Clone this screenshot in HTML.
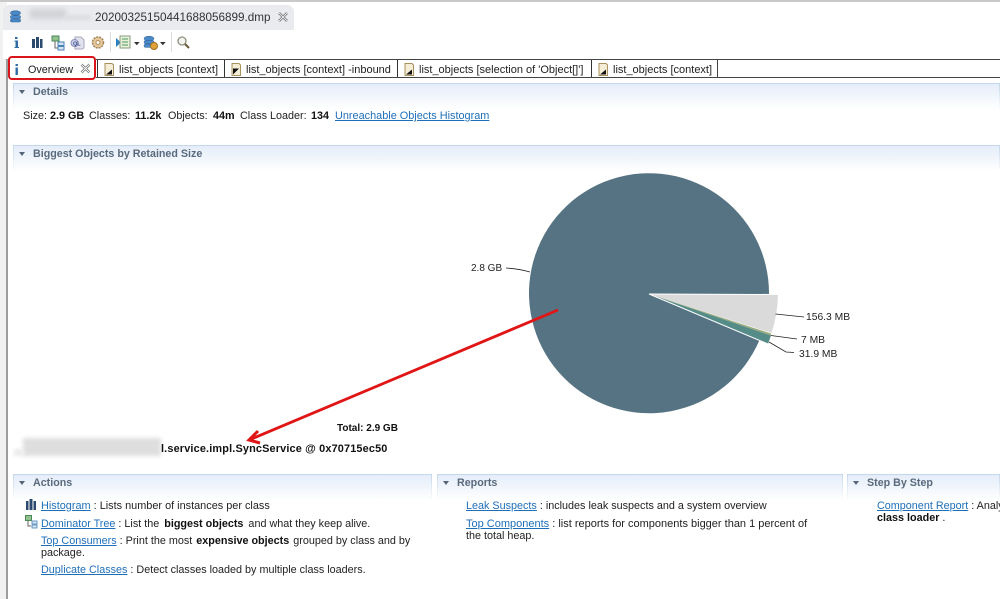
<!DOCTYPE html>
<html><head><meta charset="utf-8"><style>
html,body{margin:0;padding:0;background:#fff}
#p{position:relative;width:1000px;height:599px;overflow:hidden;background:#fff;font:10.8px/12px "Liberation Sans",sans-serif;color:#222;filter:blur(.25px)}
.t{position:absolute;white-space:nowrap}
a{color:#1f6fb8;text-decoration:underline}
b{color:#111}
.sec{position:absolute;height:26px;border-top:1px solid #c5d8ea;background:linear-gradient(#e4edf9,#fff);box-sizing:border-box}
.sec:before,.sec:after{content:"";position:absolute;top:0;width:1px;height:26px;background:linear-gradient(#c5d8ea,#fff)}
.sec:before{left:0}.sec:after{right:0}
.sec span{position:absolute;left:20px;top:2px;font-weight:bold;color:#5a6a7d;font-size:10.7px}
.sec i{position:absolute;left:6px;top:6px;width:0;height:0;border:3.5px solid transparent;border-top:4px solid #56657a}
.tab{position:absolute;top:60px;height:17px;border-left:1px solid #333;box-sizing:border-box}
</style></head><body><div id="p">
<div style="position:absolute;left:0;top:0;width:1000px;height:2px;background:#c9c9c9"></div>
<div style="position:absolute;left:0;top:2px;width:7px;height:597px;background:#f1f1f1"></div>
<div style="position:absolute;left:6px;top:30px;width:2px;height:569px;background:#9c9c9c"></div>
<div style="position:absolute;left:3px;top:5px;width:291px;height:25px;background:#e9ebef;border-radius:7px 7px 0 0"></div>
<div style="position:absolute;left:3px;top:30px;width:997px;height:29px;background:#fff"></div>

<svg style="position:absolute;left:0;top:0" width="1000" height="599">
<g fill="#4b8ac9" stroke="#2a5f96" stroke-width=".6"><ellipse cx="15.500" cy="13" rx="5" ry="2.200"/><rect x="10.500" y="15.500" width="10" height="3" rx="1.500"/><rect x="10.500" y="19" width="10" height="3" rx="1.500"/></g>
<path d="M279 13l8 8M287 13l-8 8" stroke="#666" stroke-width="2.400"/><path d="M279 13l8 8M287 13l-8 8" stroke="#f2f2f4" stroke-width="1"/>
<!-- toolbar -->
<path d="M15 37h2.500v2H15zM15 40.500h3V47h1v1h-4.500v-1h1v-5.500H14z" fill="#2e6ca6"/>
<path d="M32 39h3v9h-3zM36 37h3v11h-3zM40 39h2.500v9H40z" fill="#2c4a6e"/>
<rect x="52" y="36" width="7" height="5" fill="#8fc28f" stroke="#4d8a57"/><path d="M55 41v7h3" fill="none" stroke="#666"/><rect x="58" y="42" width="6" height="3.500" fill="#d5e6f5" stroke="#4a82b5"/><rect x="58" y="46.500" width="6" height="3.500" fill="#d5e6f5" stroke="#4a82b5"/>
<path d="M75 37h6l3 3v7a2 2 0 0 1-2 2h-7z" fill="#e2e2ee" stroke="#a7a7bb"/><ellipse cx="74.500" cy="43" rx="3.500" ry="3.500" fill="#cfd3e7" stroke="#8a90b8"/><text x="73" y="45.500" font-size="5.500" font-weight="bold" fill="#3a4d8f" font-family="Liberation Sans">QL</text>
<circle cx="98" cy="42.500" r="5.500" fill="#e5c99c" stroke="#a08259" stroke-width="1.500" stroke-dasharray="2 1"/><circle cx="98" cy="42.500" r="2" fill="#fff" stroke="#b08c5c"/>
<rect x="110" y="32" width="1" height="20" fill="#dcdcdc"/>
<path d="M116 38l5 4.500-5 4.500z" fill="#2a7fc0"/><rect x="120" y="36" width="10" height="12" fill="#e6f0dc" stroke="#8a9c7d"/><path d="M122 39h6M122 42h6M122 45h6" stroke="#4e9a59"/>
<path d="M134 42l5.600 0-2.800 3.200z" fill="#333"/>
<g fill="#4b8ac9" stroke="#2a5f96" stroke-width=".5"><ellipse cx="149" cy="38.500" rx="5" ry="2.300"/><rect x="144" y="40.500" width="10" height="3.200" rx="1.500"/><rect x="144" y="44.200" width="10" height="3.200" rx="1.500"/></g><circle cx="154" cy="46" r="3.500" fill="#e0a33c" stroke="#a0701f"/>
<path d="M160 42l5.600 0-2.800 3.200z" fill="#333"/>
<rect x="171" y="32" width="1" height="20" fill="#dcdcdc"/>
<circle cx="182" cy="41" r="4" fill="#f4f4f0" stroke="#8f8f80" stroke-width="1.300"/><path d="M185 44l4 4" stroke="#6b5a3b" stroke-width="2"/>
</svg>

<div class="t" style="left:30px;top:9px;width:36px;height:10px;background:#d2d3d7;filter:blur(2.500px)"></div>
<div class="t" style="left:66px;top:15px;width:24px;height:5px;background:#dcdde1;filter:blur(1.500px)"></div>
<div class="t" style="left:95px;top:12px;font-size:11.700px;color:#333">20200325150441688056899.dmp</div>

<!-- tab bar -->
<div style="position:absolute;left:96px;top:59px;width:904px;height:1px;background:#444"></div>
<div style="position:absolute;left:96px;top:77px;width:904px;height:1px;background:#444"></div>
<div style="position:absolute;left:717px;top:60px;width:1px;height:17px;background:#444"></div>
<div style="position:absolute;left:8px;top:56px;width:88px;height:24px;border:2.500px solid #d9141a;border-radius:4px;box-sizing:border-box;background:#fff"></div>
<div class="t" style="left:28px;top:64px;font-size:10.800px">Overview</div>
<svg style="position:absolute;left:0;top:55px" width="720" height="26">
<path d="M15.500 9h2.400v2h-2.400zM15.500 12.500h2.400V20h-2.400z" fill="#2e6ca6"/>
<path d="M81.500 9.500l8 8M89.500 9.500l-8 8" stroke="#666" stroke-width="2.400"/><path d="M81.500 9.500l8 8M89.500 9.500l-8 8" stroke="#fff" stroke-width="1"/>
<g><path d="M105 8.500h7l1.500 1.500V20.500H105z" fill="#f6edd6" stroke="#a8905f"/><path d="M106 19.500l6-5v5z" fill="#111"/></g>
<g><path d="M232 8.500h7l1.500 1.500V20.500H232z" fill="#f6edd6" stroke="#a8905f"/><path d="M233 19.500v-6h6z" fill="#111"/></g>
<g><path d="M405 8.500h7l1.500 1.500V20.500H405z" fill="#f6edd6" stroke="#a8905f"/><path d="M406 19.500l6-5v5z" fill="#111"/></g>
<g><path d="M599 8.500h7l1.500 1.500V20.500H599z" fill="#f6edd6" stroke="#a8905f"/><path d="M600 19.500l6-5v5z" fill="#111"/></g>
</svg>
<div class="tab" style="left:97px;width:127px"></div><div class="tab" style="left:224px;width:173px"></div><div class="tab" style="left:397px;width:194px"></div><div class="tab" style="left:591px;width:126px"></div>
<div class="t" style="left:119px;top:64px;font-size:11px">list_objects [context]</div>
<div class="t" style="left:246px;top:64px;font-size:11px">list_objects [context] -inbound</div>
<div class="t" style="left:419px;top:64px;font-size:11px">list_objects [selection of 'Object[]']</div>
<div class="t" style="left:613px;top:64px;font-size:11px">list_objects [context]</div>

<div class="sec" style="left:13px;top:83px;width:987px"><i></i><span>Details</span></div>
<div class="t" style="left:23px;top:110px">Size:</div><div class="t" style="left:50px;top:110px"><b>2.9 GB</b></div>
<div class="t" style="left:89px;top:110px">Classes:</div><div class="t" style="left:135px;top:110px"><b>11.2k</b></div>
<div class="t" style="left:168px;top:110px">Objects:</div><div class="t" style="left:213px;top:110px"><b>44m</b></div>
<div class="t" style="left:240px;top:110px">Class Loader:</div><div class="t" style="left:311px;top:110px"><b>134</b></div>
<div class="t" style="left:335px;top:110px;font-size:10.900px"><a>Unreachable Objects Histogram</a></div>
<div class="sec" style="left:13px;top:145px;width:987px"><i></i><span>Biggest Objects by Retained Size</span></div>

<svg style="position:absolute;left:0;top:0" width="1000" height="599">
<path d="M649 294L765 343A126 126 0 0 1 759.500 340A120 120 0 1 1 769 294Z" fill="#567383"/>
<path d="M649 294L778 294.500A129 129 0 0 1 771.500 333Z" fill="#dadada"/>
<path d="M649 294L771 333.500L771 335.500Z" fill="#9cac7c"/>
<path d="M649 294L771 335.500L768 344Z" fill="#568c88"/>
<path d="M649 294L768 344" stroke="#fff" stroke-width="1"/>
<path d="M649 294L778 294.500" stroke="#fff" stroke-width="1"/>
<path d="M506 268Q520 269 530 272M775.500 314L804 317M771 335.500L797 339M769 342L786 352L794 352.500" fill="none" stroke="#222" stroke-width=".8"/>
<path d="M558 310L249 440" stroke="#e01515" stroke-width="2.800"/>
<path d="M258 431L249 440L260 443" fill="none" stroke="#e01515" stroke-width="3"/>
</svg>
<div class="t" style="left:471px;top:263px;font-size:10px">2.8 GB</div>
<div class="t" style="left:806px;top:312px;font-size:10.300px">156.3 MB</div>
<div class="t" style="left:801px;top:335px;font-size:10.300px">7 MB</div>
<div class="t" style="left:799px;top:349px;font-size:10.300px">31.9 MB</div>
<div class="t" style="left:337px;top:423px;font-size:10px"><b>Total: 2.9 GB</b></div>
<div style="position:absolute;left:23px;top:438px;width:138px;height:18px;background:#dedede;filter:blur(2px)"></div>
<div style="position:absolute;left:14px;top:449px;width:10px;height:7px;background:#ececec;filter:blur(1.500px)"></div>
<div class="t" style="left:161px;top:443px;font-size:10.900px;font-weight:bold;color:#111;letter-spacing:.16px">l.service.impl.SyncService @ 0x70715ec50</div>

<div class="sec" style="left:13px;top:474px;width:419px"><i></i><span>Actions</span></div>
<div class="sec" style="left:437px;top:474px;width:406px"><i></i><span>Reports</span></div>
<div class="sec" style="left:847px;top:474px;width:153px"><i></i><span>Step By Step</span></div>

<svg style="position:absolute;left:0;top:0" width="60" height="599">
<path d="M26 501h2.500v9H26zM29.500 499h3v11h-3zM33.500 501h2.500v9h-2.500z" fill="#2c4a6e"/>
<rect x="25.500" y="515.500" width="6" height="5" fill="#8fc28f" stroke="#4d8a57"/><path d="M28 521v5h3" fill="none" stroke="#666"/><rect x="32" y="521" width="5" height="3" fill="#d5e6f5" stroke="#4a82b5" stroke-width=".8"/><rect x="32" y="525" width="5" height="3" fill="#d5e6f5" stroke="#4a82b5" stroke-width=".8"/>
</svg>
<div class="t" style="left:41px;top:500px;font-size:10.900px"><a>Histogram</a> : Lists number of instances per class</div>
<div class="t" style="left:41px;top:518px"><a>Dominator Tree</a> : List the <b style="margin-left:2px">biggest objects</b><span style="margin-left:2px"> and what they keep alive.</span></div>
<div class="t" style="left:41px;top:535px"><a>Top Consumers</a> : Print the most <b style="margin-left:1px">expensive objects</b><span style="margin-left:1px"> grouped by class and by</span></div>
<div class="t" style="left:41px;top:547px">package.</div>
<div class="t" style="left:41px;top:564px"><a>Duplicate Classes</a> : Detect classes loaded by multiple class loaders.</div>
<div class="t" style="left:466px;top:500px"><a>Leak Suspects</a> : includes leak suspects and a system overview</div>
<div class="t" style="left:466px;top:518px;font-size:11px"><a>Top Components</a> : list reports for components bigger than 1 percent of</div>
<div class="t" style="left:466px;top:530px">the total heap.</div>
<div class="t" style="left:877px;top:500px"><a>Component Report</a> : Analyze objects which belong to a common root package or</div>
<div class="t" style="left:877px;top:512px"><b>class loader</b> .</div>
</div></body></html>
